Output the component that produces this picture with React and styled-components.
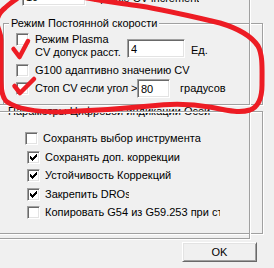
import React from 'react';
import styled, { createGlobalStyle } from 'styled-components';

const GlobalStyle = createGlobalStyle`
  html, body { margin: 0; padding: 0; background: #f0f0f0; }
  body {
    font-family: "Liberation Sans", Arial, sans-serif;
    font-size: 11px;
    color: #000;
  }
`;

const Dialog = styled.div`
  position: relative;
  width: 274px;
  height: 268px;
  overflow: hidden;
  background: #f0f0f0;
`;

const TopRow = styled.div`
  display: flex;
  align-items: flex-end;
  height: 19px;
  margin-top: -13px;
  padding-left: 22px;
`;

const Field = styled.input`
  box-sizing: border-box;
  width: ${p => p.$w}px;
  height: 19px;
  margin: 0 0 ${p => p.$mb || 0}px 0;
  padding: 0 0 0 3px;
  background: #fff;
  border: 1px solid;
  border-color: #a0a0a0 #fff #fff #a0a0a0;
  box-shadow: inset 1px 1px 0 #696969, inset -1px -1px 0 #e3e3e3;
  font: 11px "Liberation Sans", Arial, sans-serif;
  color: #000;
  outline: none;
  flex: none;
`;

const Text = styled.span`
  flex: none;
  line-height: 13px;
  white-space: nowrap;
  overflow: hidden;
  margin-left: ${p => p.$ml || 0}px;
  margin-bottom: ${p => p.$mb || 0}px;
  width: ${p => (p.$w ? `${p.$w}px` : 'auto')};
  letter-spacing: ${p => p.$ls || 0}px;
`;

const Group = styled.fieldset`
  box-sizing: border-box;
  width: ${p => p.$width}px;
  margin: ${p => p.$top}px 0 0 ${p => p.$left}px;
  padding: 0 0 ${p => p.$bottom}px 0;
  min-inline-size: 0;
  border: 1px solid #a0a0a0;
  box-shadow: inset 1px 1px 0 #fff, 1px 1px 0 #fff;
`;

const Legend = styled.legend`
  margin-left: ${p => p.$indent}px;
  padding: 0 2px;
  line-height: 13px;
  background: #f0f0f0;
  white-space: nowrap;
`;

const Rows = styled.div`
  display: flex;
  flex-direction: column;
  padding-top: ${p => p.$top}px;
`;

const Row = styled.div`
  display: flex;
  align-items: ${p => p.$align || 'center'};
  height: ${p => p.$h}px;
  margin-top: ${p => p.$mt || 0}px;
  padding-left: ${p => p.$indent}px;
`;

const Box = styled.span`
  flex: none;
  box-sizing: border-box;
  width: 13px;
  height: 13px;
  background: #fff;
  border: 1px solid;
  border-color: #a0a0a0 #fff #fff #a0a0a0;
  box-shadow: inset 1px 1px 0 #696969, inset -1px -1px 0 #e3e3e3;
  display: flex;
  align-items: center;
  justify-content: center;
`;

const Frame = styled.div`
  position: absolute;
  left: ${p => p.$l}px;
  top: ${p => p.$t}px;
  width: ${p => p.$w}px;
  height: ${p => p.$h}px;
  box-sizing: border-box;
  border: 1px solid #a0a0a0;
  box-shadow: inset 1px 1px 0 #fff, 1px 1px 0 #fff;
  pointer-events: none;
`;

const Footer = styled.div`
  display: flex;
  justify-content: flex-end;
  margin-top: 8px;
  padding-right: 17px;
`;

const Button = styled.button`
  box-sizing: border-box;
  width: 75px;
  height: 20px;
  padding: 0;
  background: #f0f0f0;
  border: 1px solid;
  border-color: #fff #696969 #696969 #fff;
  box-shadow: inset 1px 1px 0 #e3e3e3, inset -1px -1px 0 #a0a0a0;
  font: 11px "Liberation Sans", Arial, sans-serif;
  color: #000;
`;

const Marker = styled.svg`
  position: absolute;
  left: 0;
  top: 0;
  pointer-events: none;
`;

const Tick = () => (
  <svg width="7" height="7" viewBox="0 0 7 7" shapeRendering="crispEdges">
    <path
      fill="#000"
      d="M0 2h1v3H0zM1 3h1v3H1zM2 4h1v3H2zM3 3h1v3H3zM4 2h1v3H4zM5 1h1v3H5zM6 0h1v3H6z"
    />
  </svg>
);

const Check = ({ checked }) => <Box>{checked && <Tick />}</Box>;

const displayOptions = [
  { label: 'Сохранять выбор инструмента', checked: false, h: 19, indent: 44 },
  { label: 'Сохранять доп. коррекции', checked: true, h: 18, indent: 46 },
  { label: 'Устойчивость Коррекций', checked: true, h: 19, indent: 46 },
  { label: 'Закрепить DROs при смене', checked: true, h: 18, indent: 46, w: 84 },
  { label: 'Копировать G54 из G59.253 при старте', checked: false, h: 18, indent: 46, w: 175 },
];

export default function App() {
  return (
    <Dialog>
      <GlobalStyle />
      <TopRow>
        <Field $w={64} defaultValue="10" readOnly />
        <Text $ml={7} $mb={1}>Spindle CV increment</Text>
      </TopRow>

      <Group $top={11} $left={3} $width={260} $bottom={6}>
        <Legend $indent={5}>Режим Постоянной скорости</Legend>
        <Rows $top={2}>
          <Row $h={15} $indent={12}>
            <Check />
            <Text $ml={6} $w={74}>Режим Plasma</Text>
          </Row>
          <Row $h={20} $mt={-8} $indent={31} $align="flex-end">
            <Text $w={92}>CV допуск расст.</Text>
            <Field $w={58} $mb={1} defaultValue="4" readOnly />
            <Text $ml={6} $mb={2}>Ед.</Text>
          </Row>
          <Row $h={15} $mt={4} $indent={12}>
            <Check />
            <Text $ml={6}>G100 адаптивно значению CV</Text>
          </Row>
          <Row $h={19} $mt={1} $indent={12}>
            <Check />
            <Text $ml={6} $w={102} $ls={-0.12}>Стоп CV если угол &gt;</Text>
            <Field $w={33} defaultValue="80" readOnly />
            <Text $ml={10}>градусов</Text>
          </Row>
        </Rows>
      </Group>

      <Group $top={0} $left={-20} $width={283} $bottom={12}>
        <Legend $indent={25}>Параметры Цифровой индикации Осей</Legend>
        <Rows $top={11}>
          {displayOptions.map(o => (
            <Row key={o.label} $h={o.h} $indent={o.indent}>
              <Check checked={o.checked} />
              <Text $ml={5} $w={o.w}>{o.label}</Text>
            </Row>
          ))}
        </Rows>
      </Group>

      <Footer>
        <Button>OK</Button>
      </Footer>

      <Frame $l={-10} $t={-20} $w={260} $h={125} />
      <Frame $l={-10} $t={111} $w={260} $h={128} />

      <Marker width="274" height="268" viewBox="0 0 274 268">
        <g fill="none" stroke="#ed1c24" strokeLinecap="round" strokeLinejoin="round">
          <path
            strokeWidth="5"
            d="M82,-3 C100,1 120,3 140,6 C165,10 195,17 220,23 C240,29 252,37 258,46 C263,55 262,70 262,85 C262,98 258,107 250,110 C240,113 230,111 215,108 C195,104 175,103 150,106 C120,109 90,111 60,112 C35,112 15,108 6,101 C1,95 1,85 1,75 L1,40 C1,32 -3,28 -3,22 C-3,17 0,12 5,8 C9,4 14,1 19,-3"
          />
          <path strokeWidth="4.5" d="M13.5,49 L19.5,57 L28,41" />
          <path strokeWidth="4.5" d="M14.5,86 L20,93 L34,79" />
        </g>
      </Marker>
    </Dialog>
  );
}
